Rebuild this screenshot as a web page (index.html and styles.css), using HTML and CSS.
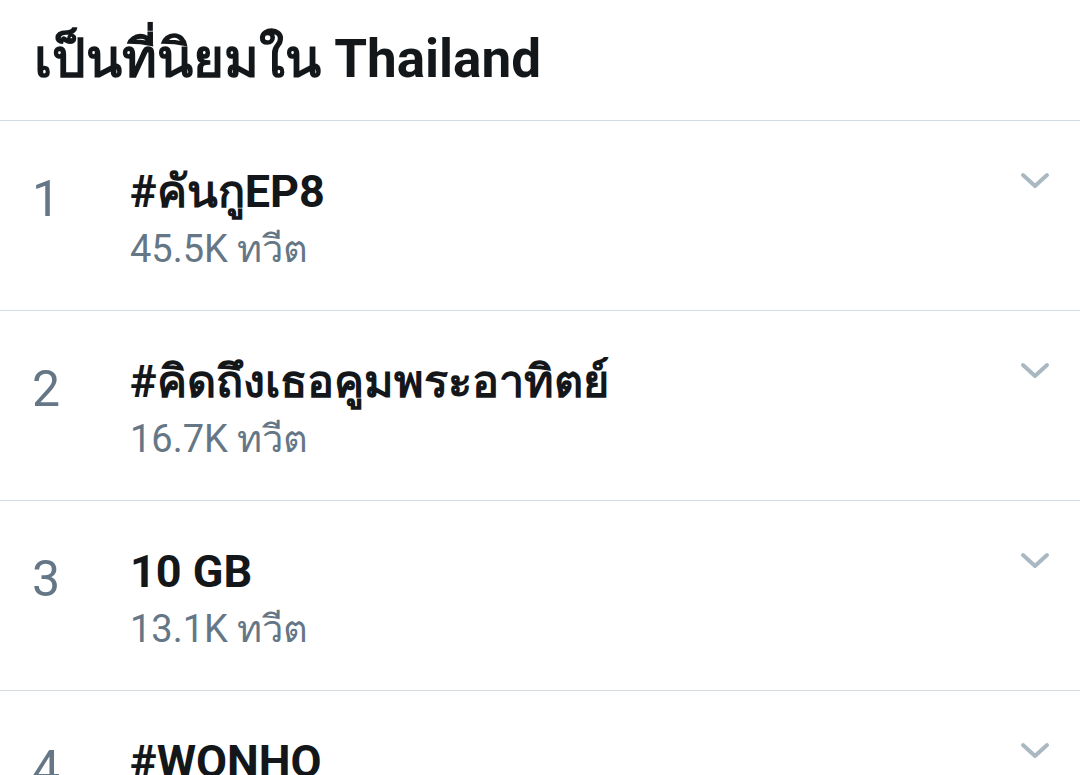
FILE: index.html
```
<!DOCTYPE html>
<html lang="th">
<head>
    <meta charset="UTF-8">
    <meta name="viewport" content="width=device-width, initial-scale=1.0">
    <title>เป็นที่นิยมใน Thailand</title>
    <link rel="stylesheet" href="styles.css">
</head>
<body>

    <header class="header">เป็นที่นิยมใน Thailand</header>

    <div class="trend">
        <div class="rank">1</div>
        <div class="info">
            <div class="name">#คันกูEP8</div>
            <div class="count">45.5K ทวีต</div>
        </div>
        <svg class="chevron" viewBox="0 0 30 18"><path d="M3 3 L15 14 L27 3"/></svg>
    </div>

    <div class="trend">
        <div class="rank">2</div>
        <div class="info">
            <div class="name">#คิดถึงเธอคูมพระอาทิตย์</div>
            <div class="count">16.7K ทวีต</div>
        </div>
        <svg class="chevron" viewBox="0 0 30 18"><path d="M3 3 L15 14 L27 3"/></svg>
    </div>

    <div class="trend">
        <div class="rank">3</div>
        <div class="info">
            <div class="name">10 GB</div>
            <div class="count">13.1K ทวีต</div>
        </div>
        <svg class="chevron" viewBox="0 0 30 18"><path d="M3 3 L15 14 L27 3"/></svg>
    </div>

    <div class="trend">
        <div class="rank">4</div>
        <div class="info">
            <div class="name">#WONHO</div>
        </div>
        <svg class="chevron" viewBox="0 0 30 18"><path d="M3 3 L15 14 L27 3"/></svg>
    </div>

</body>
</html>
```

FILE: styles.css
```
body {
    margin: 0;
    background-color: #fff;
    color: #14171a;
    font-family: Roboto, "Noto Sans", "DejaVu Sans", sans-serif;
    overflow: hidden;
}

.header {
    padding: 24px 0 26px 34px;
    font-size: 53px;
    line-height: 70px;
    font-weight: 700;
    border-bottom: 1px solid #d3dbe0;
}

.trend {
    display: flex;
    align-items: flex-start;
    height: 189px;
    border-bottom: 1px solid #d3dbe0;
}

.rank {
    width: 98px;
    padding-left: 32px;
    margin-top: 48px;
    font-size: 50px;
    line-height: 60px;
    color: #657786;
}

.info {
    flex: 1;
    margin-top: 45px;
}

.name {
    font-size: 45px;
    line-height: 52px;
    font-weight: 700;
}

.count {
    margin-top: 8px;
    font-size: 38px;
    line-height: 46px;
    color: #657786;
}

.chevron {
    width: 30px;
    height: 18px;
    margin: 51px 30px 0 0;
    fill: none;
    stroke: #aab8c2;
    stroke-width: 4;
    stroke-linecap: round;
    stroke-linejoin: round;
}
```
